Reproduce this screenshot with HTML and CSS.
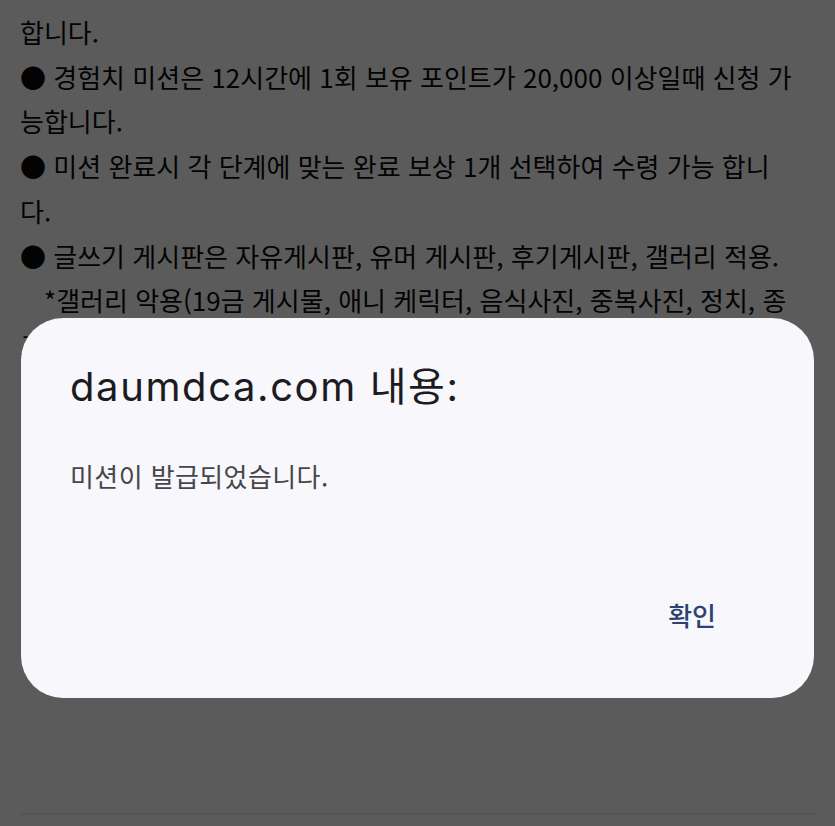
FILE: index.html
```html
<!DOCTYPE html>
<html lang="ko">
<head>
<meta charset="utf-8">
<title>daumdca.com</title>
<link rel="stylesheet" href="styles.css">
</head>
<body>
<div class="page">
  <div class="notice">
    <p class="line">합니다.</p>
    <p class="line">● 경험치 미션은 12시간에 1회 보유 포인트가 20,000 이상일때 신청 가</p>
    <p class="line">능합니다.</p>
    <p class="line">● 미션 완료시 각 단계에 맞는 완료 보상 1개 선택하여 수령 가능 합니</p>
    <p class="line">다.</p>
    <p class="line">● 글쓰기 게시판은 자유게시판, 유머 게시판, 후기게시판, 갤러리 적용.</p>
    <p class="line indent">*갤러리 악용(19금 게시물, 애니 케릭터, 음식사진, 중복사진, 정치, 종</p>
    <p class="line">교 등) 게시물은 미션 완료로 인정되지 않습니다.</p>
  </div>
  <hr class="rule">
</div>

<div class="overlay">
  <div class="dialog" role="alertdialog">
    <h1 class="dialog-title">daumdca.com 내용:</h1>
    <p class="dialog-message">미션이 발급되었습니다.</p>
    <div class="dialog-actions">
      <button class="dialog-button" type="button">확인</button>
    </div>
  </div>
</div>
</body>
</html>
```

FILE: styles.css
```css
html, body {
  margin: 0;
  padding: 0;
  background: #ffffff;
  overflow: hidden;
}

.page {
  height: 826px;
  box-sizing: border-box;
  display: flex;
  flex-direction: column;
  padding: 10px 20px 0 20px;
  font-family: "Noto Sans CJK KR", "Noto Sans", sans-serif;
  color: #0a0a0a;
}

.line {
  margin: 0;
  font-size: 26px;
  line-height: 44.7px;
  white-space: nowrap;
}

.line.indent {
  padding-left: 24px;
}

.rule {
  margin: auto 0 11px 0;
  border: 0;
  height: 2px;
  background: #eeeeee;
}

.overlay {
  position: fixed;
  inset: 0;
  background: rgba(0, 0, 0, 0.643);
  display: flex;
  align-items: flex-start;
  padding: 318px 21px 0 21px;
}

.dialog {
  flex: 1;
  height: 380px;
  box-sizing: border-box;
  background: #f7f7fc;
  border-radius: 42px;
  padding: 44px 50px 0 49px;
  display: flex;
  flex-direction: column;
}

.dialog-title {
  margin: 0;
  font-family: "Inter", "Noto Sans CJK KR", sans-serif;
  font-weight: 400;
  font-size: 40px;
  line-height: 50px;
  letter-spacing: 1.6px;
  color: #1c1b1f;
}

.dialog-message {
  margin: 47px 0 0 0;
  font-family: "Noto Sans CJK KR", sans-serif;
  font-size: 26px;
  line-height: 34px;
  letter-spacing: 0.4px;
  color: #46464a;
}

.dialog-actions {
  display: flex;
  justify-content: flex-end;
  margin-top: 104px;
}

.dialog-button {
  border: 0;
  background: transparent;
  padding: 0 48px 0 0;
  font-family: "Noto Sans CJK KR", sans-serif;
  font-weight: 500;
  font-size: 26px;
  line-height: 36px;
  color: #2c4272;
}
```
